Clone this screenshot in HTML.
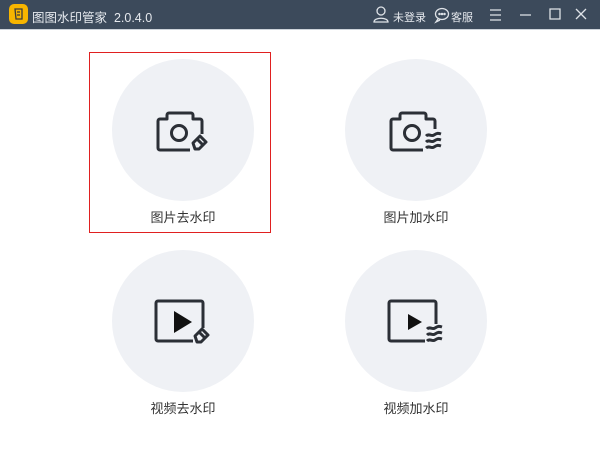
<!DOCTYPE html>
<html><head><meta charset="utf-8"><style>
body{margin:0;width:600px;height:459px;background:#fff;font-family:"Liberation Sans","Noto Sans CJK SC",sans-serif;position:relative;overflow:hidden}
.bar{position:absolute;left:0;top:0;width:600px;height:29px;background:#3c4a5b;color:#e6e9ee;font-size:12px}
.t{position:absolute;top:7px;white-space:nowrap}
.lbl{position:absolute;font-size:13px;color:#333;width:140px;text-align:center}
</style></head><body>
<div class="bar">
<div style="position:absolute;left:9px;top:4px;width:19px;height:20px;border-radius:5px;background:#f7b500"></div>
<svg style="position:absolute;left:9px;top:4px" width="19" height="20"><path d="M6 5h7v10H7z M8 8h3 M8 11h3" fill="none" stroke="#3c3c3c" stroke-width="1.3"/></svg>
<span class="t" style="left:32px;font-size:12.5px">图图水印管家&nbsp; 2.0.4.0</span>
<svg style="position:absolute;left:370px;top:6px" width="230" height="18" fill="none" stroke="#dfe3e8" stroke-width="1.3">
<circle cx="11" cy="5" r="4"/><path d="M4 16c0-5 14-5 14 0z"/>
<ellipse cx="72" cy="8" rx="6.5" ry="5.5"/><path d="M68 13l-2 3 4-2"/><circle cx="69.5" cy="8" r=".6"/><circle cx="72" cy="8" r=".6"/><circle cx="74.5" cy="8" r=".6"/>
<path d="M120 4h11M120 9h11M120 14h11M150 9h11M180 3h10v10h-10zM206 3l10 10M216 3l-10 10"/>
</svg>
<span class="t" style="left:393px;font-size:11px;top:9px">未登录</span>
<span class="t" style="left:451px;font-size:11px;top:9px">客服</span>
</div>
<div style="position:absolute;left:0;top:29px;width:600px;height:1px;background:#cdd3da"></div>
<div style="position:absolute;left:89px;top:52px;width:180px;height:179px;border:1px solid #e02020"></div>
<svg style="position:absolute;left:0;top:0" width="600" height="459">
<g fill="#eff1f5"><circle cx="183" cy="130" r="71"/><circle cx="416" cy="130" r="71"/><circle cx="183" cy="321" r="71"/><circle cx="416" cy="321" r="71"/></g>
<g fill="none" stroke="#2b2f36" stroke-width="3" stroke-linejoin="round">
<path d="M190 150H160a2 2 0 0 1-2-2V121a2 2 0 0 1 2-2h7v-4a2 2 0 0 1 2-2h22a2 2 0 0 1 2 2v4h7a2 2 0 0 1 2 2v13"/>
<circle cx="179" cy="133" r="7.5"/>
<path d="M193 143l7-7 6 6-7 7h-4z M197 139l5 5"/>
<path d="M423 150H393a2 2 0 0 1-2-2V121a2 2 0 0 1 2-2h7v-4a2 2 0 0 1 2-2h22a2 2 0 0 1 2 2v4h7a2 2 0 0 1 2 2v8"/>
<circle cx="412" cy="133" r="7.5"/>
<path d="M426 136c3-3 5 1 8-1s4-2 7-1M426 142c3-3 5 1 8-1s4-2 7-1M426 148c3-3 5 1 8-1s4-2 7-1"/>
<path d="M193 341H158a2 2 0 0 1-2-2V303a2 2 0 0 1 2-2h43a2 2 0 0 1 2 2v25"/>
<path d="M195 336l7-7 6 6-7 7h-4z M199 332l5 5"/>
<path d="M425 341H391a2 2 0 0 1-2-2V303a2 2 0 0 1 2-2h43a2 2 0 0 1 2 2v21"/>
<path d="M427 329c3-3 5 1 8-1s4-2 7-1M427 335c3-3 5 1 8-1s4-2 7-1M427 341c3-3 5 1 8-1s4-2 7-1"/>
</g>
<path d="M174 311l18 11-18 11z" fill="#111"/>
<path d="M408 314l14 8-14 8z" fill="#111"/>
</svg>
<div class="lbl" style="left:113px;top:207px">图片去水印</div>
<div class="lbl" style="left:346px;top:207px">图片加水印</div>
<div class="lbl" style="left:113px;top:398px">视频去水印</div>
<div class="lbl" style="left:346px;top:398px">视频加水印</div>
</body></html>
